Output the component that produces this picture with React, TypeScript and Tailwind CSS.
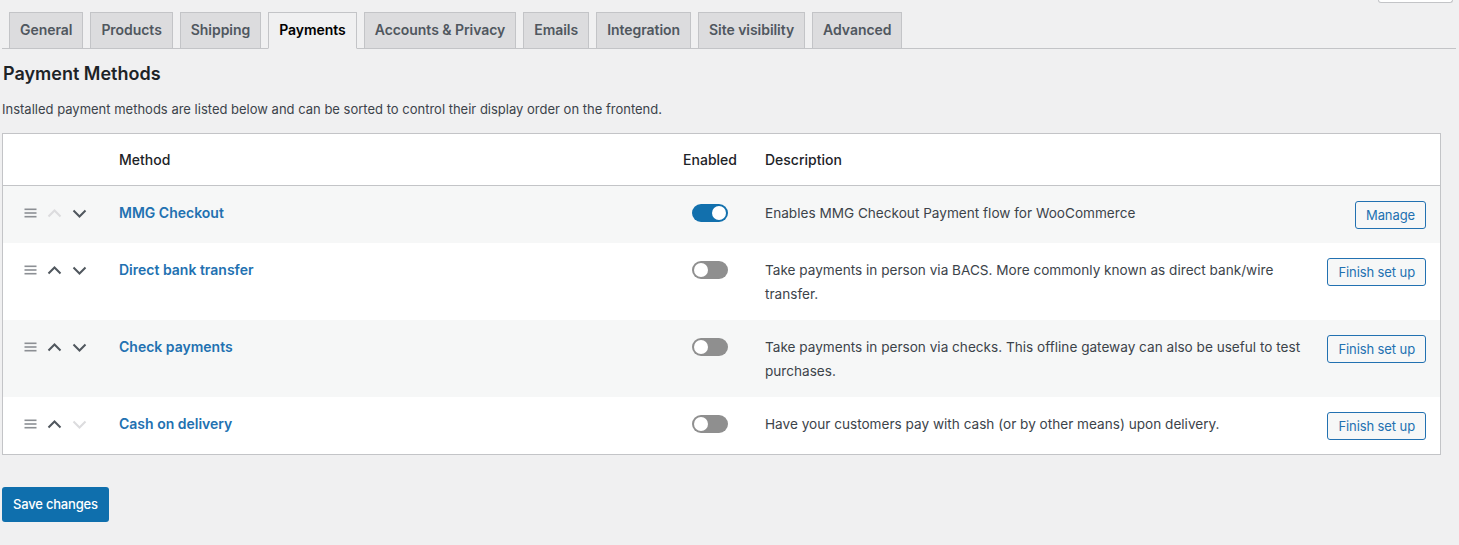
import React from "react";

const tabs = [
  "General",
  "Products",
  "Shipping",
  "Payments",
  "Accounts & Privacy",
  "Emails",
  "Integration",
  "Site visibility",
  "Advanced",
];

type Row = {
  name: string;
  enabled: boolean;
  desc: string;
  action: string;
  upDisabled?: boolean;
  downDisabled?: boolean;
};

const rows: Row[] = [
  {
    name: "MMG Checkout",
    enabled: true,
    desc: "Enables MMG Checkout Payment flow for WooCommerce",
    action: "Manage",
    upDisabled: true,
  },
  {
    name: "Direct bank transfer",
    enabled: false,
    desc: "Take payments in person via BACS. More commonly known as direct bank/wire transfer.",
    action: "Finish set up",
  },
  {
    name: "Check payments",
    enabled: false,
    desc: "Take payments in person via checks. This offline gateway can also be useful to test purchases.",
    action: "Finish set up",
  },
  {
    name: "Cash on delivery",
    enabled: false,
    desc: "Have your customers pay with cash (or by other means) upon delivery.",
    action: "Finish set up",
    downDisabled: true,
  },
];

function Handle() {
  return (
    <svg width="13" height="10" viewBox="0 0 13 10" className="block">
      <rect x="0.5" y="0.5" width="12" height="1.6" fill="#8c8f94" />
      <rect x="0.5" y="4.2" width="12" height="1.6" fill="#8c8f94" />
      <rect x="0.5" y="7.9" width="12" height="1.6" fill="#8c8f94" />
    </svg>
  );
}

function Chevron({ up, disabled }: { up?: boolean; disabled?: boolean }) {
  return (
    <svg width="15" height="9" viewBox="0 0 15 9" className="block">
      <path
        d={up ? "M1.5 7.5 L7.5 1.5 L13.5 7.5" : "M1.5 1.5 L7.5 7.5 L13.5 1.5"}
        fill="none"
        stroke={disabled ? "#dcdcde" : "#50575e"}
        strokeWidth="2"
      />
    </svg>
  );
}

function Toggle({ on }: { on: boolean }) {
  return on ? (
    <div className="w-[36px] h-[18px] rounded-full bg-[#1270ad] flex items-center justify-end pr-[2px]">
      <div className="w-[14px] h-[14px] rounded-full bg-white" />
    </div>
  ) : (
    <div className="w-[36px] h-[18px] rounded-full bg-[#8f8f8f] flex items-center pl-[2px]">
      <div className="w-[14px] h-[14px] rounded-full bg-white" />
    </div>
  );
}

export default function App() {
  return (
    <div
      className="min-h-[545px] bg-[#f0f0f1] px-[2px] text-[#3c434a]"
      style={{ fontFamily: "Inter, 'Noto Sans', sans-serif" }}
    >
      <div className="flex justify-end pr-[4px]">
        <div className="w-[75px] h-[3px] bg-white border-x border-b border-[#c3c4c7] rounded-b-[3px]" />
      </div>
      <div className="mt-[9px] flex border-b border-[#c3c4c7] mr-[1px]">
        {tabs.map((t) => {
          const active = t === "Payments";
          return (
            <div
              key={t}
              className={
                active
                  ? "ml-[7px] -mb-px px-[10px] pt-[5px] pb-[6px] text-[14px] tracking-[-0.05px] leading-[24px] font-semibold border border-[#c3c4c7] border-b-[#f0f0f1] bg-[#f0f0f1] text-black"
                  : "ml-[7px] -mb-px px-[10px] pt-[5px] pb-[6px] text-[14px] tracking-[-0.05px] leading-[24px] font-semibold border border-[#c3c4c7] bg-[#dcdcde] text-[#50575e]"
              }
            >
              {t}
            </div>
          );
        })}
      </div>

      <h2 className="mt-[13px] pl-[1px] text-[18px] leading-[24px] font-semibold text-[#1d2327]">
        Payment Methods
      </h2>
      <p className="mt-[13px] text-[13px] leading-[20px] text-[#3c434a]">
        Installed payment methods are listed below and can be sorted to control their display order on the frontend.
      </p>

      <div className="mt-[14px] w-[1439px] border border-[#c3c4c7] bg-white">
        <div className="flex border-b border-[#c3c4c7] pt-[14px] pb-[13px] text-[14px] leading-[24px] font-medium text-[#1d2327]">
          <div className="w-[116px]" />
          <div className="w-[554px]">Method</div>
          <div className="w-[74px] text-center">Enabled</div>
          <div className="pl-[18px]">Description</div>
        </div>
        {rows.map((r, i) => (
          <div
            key={r.name}
            className={
              i % 2 === 0
                ? "flex pt-[15px] pb-[14px] text-[14px] leading-[24px] bg-[#f6f7f7]"
                : "flex pt-[15px] pb-[14px] text-[14px] leading-[24px] bg-white"
            }
          >
            <div className="w-[116px] pl-[21px] h-[24px] flex items-center gap-[10px]">
              <Handle />
              <Chevron up disabled={r.upDisabled} />
              <Chevron disabled={r.downDisabled} />
            </div>
            <div className="w-[554px] font-semibold text-[#2271b1]">{r.name}</div>
            <div className="w-[74px] h-[24px] flex items-center justify-center">
              <Toggle on={r.enabled} />
            </div>
            <div className="flex-1 pl-[18px] pr-[8px] text-[13.6px] leading-[24px] text-[#3c434a]">{r.desc}</div>
            <div className="w-[122px] pr-[14px] flex justify-end items-start">
              <button className="h-[28px] px-[10px] rounded-[3px] border border-[#2271b1] bg-[#f6f7f7] text-[#2271b1] text-[13px] tracking-[-0.1px] leading-[26px] whitespace-nowrap">
                {r.action}
              </button>
            </div>
          </div>
        ))}
      </div>

      <button className="mt-[32px] h-[35px] px-[11px] rounded-[3px] bg-[#0f6fad] text-white text-[13px] tracking-[-0.2px] font-medium">
        Save changes
      </button>
    </div>
  );
}
